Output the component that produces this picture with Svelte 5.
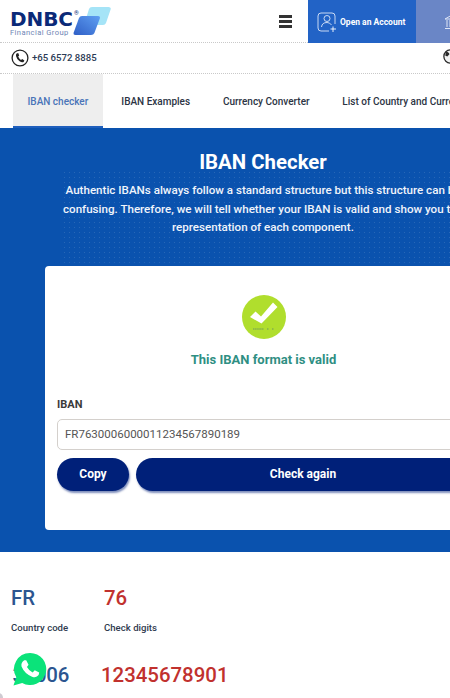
<script>
  const tabs = ["IBAN checker", "IBAN Examples", "Currency Converter", "List of Country and Currency"];
</script>

<div class="page">
  <header class="top">
    <div class="logo">
      <div class="brand">
        <span class="name">DNBC</span><span class="reg">®</span>
        <span class="sub">Financial Group</span>
      </div>
      <svg class="logo-mark" width="38" height="29" viewBox="0 0 38 29">
        <defs>
          <linearGradient id="lb" x1="0" y1="1" x2="1" y2="0">
            <stop offset="0" stop-color="#2f5fc6" />
            <stop offset="1" stop-color="#5f9ff2" />
          </linearGradient>
        </defs>
        <path d="M16 2 Q16.6 0 19 0 H35.5 Q38.4 0 37.6 2.5 L33 16 Q32.2 18 30 18 H11 Z" fill="#a5e4f7" />
        <path d="M6 11 Q6.8 9 9 9 H25 Q27.6 9 26.8 11.5 L21.4 26 Q20.6 28 18 28 H2.5 Q0 28 0.7 25.5 Z" fill="url(#lb)" />
      </svg>
    </div>
    <button class="burger" aria-label="Menu">
      <span></span><span></span><span></span>
    </button>
    <div class="account">
      <svg width="20" height="20" viewBox="0 0 20 20" fill="none" stroke="#dbe6f8" stroke-width="0.9">
        <path d="M12 19 H4 Q1 19 1 16 V4 Q1 1 4 1 H15 Q18 1 18 4 V12" />
        <circle cx="10" cy="6.5" r="3" />
        <path d="M4.5 15 Q5 10.5 10 10.5 Q13 10.5 14.5 13" />
        <path d="M16 14.5 V20 M13.5 17 H19" stroke="#fff" />
      </svg>
      <span>Open an Account</span>
    </div>
    <div class="bank">
      <svg width="18" height="18" viewBox="0 0 18 18" fill="none" stroke="#dfe6f6" stroke-width="1">
        <path d="M2 6 L9 2 L16 6 Z M4 7 V14 M7 7 V14 M11 7 V14 M14 7 V14 M2 15.5 H16" />
      </svg>
    </div>
  </header>

  <div class="contact">
    <svg class="phone" width="18" height="18" viewBox="0 0 18 18" fill="none">
      <circle cx="9" cy="9" r="7.9" stroke="#222" stroke-width="1.3" />
      <path d="M5.6 4.6 L7.2 4 L8.2 6.6 L7.2 7.6 Q8 9.8 10 11 L11.2 10 L13.4 11.4 L12.6 13 Q11 14 8.6 12.2 Q5.6 10 5 7 Q4.8 5.4 5.6 4.6 Z" fill="#222" />
    </svg>
    <span class="tel">+65 6572 8885</span>
    <svg class="globe" width="15" height="15" viewBox="0 0 14 14">
      <circle cx="7" cy="7" r="6.2" fill="#f2f2f2" stroke="#2a2a2a" stroke-width="1.2" />
      <path d="M3 2.5 Q6 3 6 5 L4 7 L2 6 Z M8 7 L12 7.5 L10 12 L8 11 Z M8 1 L11 2.5 L9 4 Z" fill="#2a2a2a" />
    </svg>
  </div>

  <nav class="tabs">
    {#each tabs as tab, i}
      <div class="tab" class:active={i === 0}>{tab}</div>
    {/each}
  </nav>

  <section class="hero">
    <div class="dots"></div>
    <h1>IBAN Checker</h1>
    <p>Authentic IBANs always follow a standard structure but this structure can be confusing. Therefore, we will tell whether your IBAN is valid and show you the representation of each component.</p>

    <div class="card">
      <svg class="check" width="44" height="44" viewBox="0 0 44 44">
        <circle cx="22" cy="22" r="22" fill="#b0de2d" />
        <path d="M8 22 L13.5 16.5 L19 21.5 L31 7.5 L35.5 12 L19.5 28.5 Z" fill="#fff" />
        <path d="M11 34 H22 M25 34 H27 M30 34 H32" stroke="#8fbb45" stroke-width="2" stroke-dasharray="1.5 0.6" />
      </svg>
      <div class="valid">This IBAN format is valid</div>
      <label class="label" for="iban">IBAN</label>
      <input id="iban" class="input" value="FR7630006000011234567890189" readonly />
      <div class="actions">
        <button class="btn copy">Copy</button>
        <button class="btn again">Check again</button>
      </div>
    </div>
  </section>

  <section class="parts">
    <div class="part">
      <div class="val blue">FR</div>
      <div class="cap">Country code</div>
    </div>
    <div class="part">
      <div class="val red">76</div>
      <div class="cap">Check digits</div>
    </div>
    <div class="part">
      <div class="val blue num bank-code">30006</div>
    </div>
    <div class="part">
      <div class="val red num acct">12345678901</div>
    </div>
  </section>

  <a class="whatsapp" href="#top" aria-label="WhatsApp">
    <svg width="35" height="34" viewBox="0 0 36 35">
      <path d="M18.5 1 A16.5 16.5 0 1 1 10.5 31.8 L1.5 34.5 L4.4 26 A16.5 16.5 0 0 1 18.5 1 Z" fill="#0be37a" />
      <path d="M12.6 8.6 L14.6 8.4 L17 13.2 L15.4 15.4 Q17.4 19.2 21.2 21 L23.4 18.8 L28 21.2 L27.4 23.8 Q25 27 20.6 25.4 Q13 22.6 9.8 15 Q9 11 12.6 8.6 Z" fill="#fff" />
    </svg>
  </a>
  <div class="corner"></div>
</div>

<style>
  :global(body) {
    margin: 0;
    overflow: hidden;
    background: #fff;
  }

  .page {
    position: relative;
    width: 526px;
    height: 698px;
    overflow: hidden;
    font-family: Roboto, "Liberation Sans", sans-serif;
    color: #222;
  }

  .top {
    display: flex;
    align-items: stretch;
    height: 43px;
    border-bottom: 1px dotted #c9c9c9;
    box-sizing: border-box;
  }

  .logo {
    display: flex;
    width: 278px;
    padding: 10px 0 0 10px;
    box-sizing: border-box;
    position: relative;
  }

  .brand {
    position: relative;
    line-height: 1;
  }

  .name {
    display: block;
    font-family: "DejaVu Sans", sans-serif;
    font-size: 20px;
    font-weight: 700;
    letter-spacing: -0.1px;
    color: #0b2a78;
    line-height: 18px;
  }

  .reg {
    position: absolute;
    left: 64px;
    top: 0;
    font-size: 6px;
    color: #0b2a78;
  }

  .sub {
    display: block;
    margin-top: 1px;
    font-size: 7.6px;
    letter-spacing: 0.4px;
    color: #6f86b5;
  }

  .logo-mark {
    position: absolute;
    left: 73px;
    top: 7px;
  }

  .burger {
    width: 30px;
    padding: 0 15px 0 0;
    background: none;
    border: none;
    display: flex;
    flex-direction: column;
    align-items: center;
    justify-content: center;
    gap: 2px;
  }

  .burger span {
    display: block;
    flex: none;
    width: 13px;
    height: 3px;
    background: #333;
  }

  .account {
    width: 108px;
    height: 43px;
    background: #2263c6;
    display: flex;
    align-items: center;
    gap: 3px;
    padding-left: 9px;
    box-sizing: border-box;
    color: #fff;
    font-size: 8.5px;
    font-weight: 700;
    white-space: nowrap;
  }

  .bank {
    flex: 1;
    height: 43px;
    background: #6a86c6;
    display: flex;
    align-items: center;
    padding-left: 27px;
  }

  .contact {
    display: flex;
    align-items: center;
    height: 31px;
    padding: 0 0 1px 11px;
    box-sizing: border-box;
    border-bottom: 1px dotted #c9c9c9;
    position: relative;
  }

  .tel {
    margin-left: 3px;
    font-size: 9.6px;
    font-weight: 500;
    color: #2b3a55;
  }

  .globe {
    position: absolute;
    left: 443px;
    top: 6px;
  }

  .tabs {
    display: flex;
    height: 54px;
    padding-left: 13px;
  }

  .tab {
    display: flex;
    align-items: center;
    padding: 0 14.5px;
    font-size: 10px;
    font-weight: 500;
    color: #2c3444;
    white-space: nowrap;
    box-sizing: border-box;
  }

  .tab + .tab {
    margin-left: 3.8px;
  }

  .tab.active {
    width: 90px;
    background: #eeeeee;
    color: #4a74b8;
    border-bottom: 2px solid #1f5fbd;
    padding-top: 2px;
  }

  .hero {
    position: relative;
    height: 424px;
    background: #0a52ae;
    padding-top: 20px;
    box-sizing: border-box;
    text-align: center;
    color: #fff;
  }

  .dots {
    position: absolute;
    left: 62px;
    top: 42px;
    width: 400px;
    height: 125px;
    background-image: radial-gradient(circle, rgba(255, 255, 255, 0.12) 0.7px, transparent 1px);
    background-size: 5px 5px;
    -webkit-mask-image: linear-gradient(to bottom, #000 70%, transparent);
    mask-image: linear-gradient(to bottom, #000 70%, transparent);
  }

  h1 {
    position: relative;
    margin: 0;
    font-size: 20.4px;
    font-weight: 700;
    line-height: 28px;
  }

  p {
    position: relative;
    width: 412px;
    margin: 5px auto 0;
    font-size: 11.6px;
    font-weight: 500;
    line-height: 18.6px;
    color: #f0f4fb;
  }

  .card {
    position: relative;
    box-sizing: border-box;
    width: 436px;
    height: 264px;
    margin: 29px 0 0 45px;
    padding: 29px 11px 0 12px;
    background: #fff;
    border-radius: 4px;
    text-align: left;
  }

  .check {
    display: block;
    margin: 0 auto;
  }

  .valid {
    margin-top: 13px;
    text-align: center;
    font-size: 13px;
    font-weight: 700;
    line-height: 16px;
    color: #2f8f83;
  }

  .label {
    display: block;
    margin-top: 30px;
    font-size: 11px;
    font-weight: 700;
    line-height: 14px;
    color: #3a3a3a;
  }

  .input {
    display: block;
    box-sizing: border-box;
    width: 100%;
    height: 31px;
    margin-top: 7px;
    padding: 0 7px;
    border: 1px solid #d4d0cc;
    border-radius: 5px;
    font-family: inherit;
    font-size: 11.5px;
    color: #555;
    background: #fff;
    outline: none;
  }

  .actions {
    display: flex;
    gap: 7px;
    margin-top: 8px;
  }

  .btn {
    height: 33px;
    border: none;
    border-radius: 17px;
    background: #002079;
    color: #fff;
    font-family: inherit;
    font-size: 12px;
    font-weight: 700;
    box-shadow: 1px 2px 2px rgba(0, 32, 121, 0.5);
  }

  .copy {
    width: 72px;
  }

  .again {
    flex: 1;
  }

  .parts {
    display: grid;
    grid-template-columns: 93px 1fr;
    padding: 32px 0 0 11px;
    row-gap: 26px;
  }

  .val {
    font-size: 20.4px;
    font-weight: 500;
    line-height: 28px;
  }

  .num {
    line-height: 30px;
  }

  .bank-code {
    margin-left: 1.5px;
    letter-spacing: -0.3px;
  }

  .acct {
    margin-left: -3px;
  }

  .blue {
    color: #2c5590;
  }

  .red {
    color: #c1312e;
  }

  .cap {
    margin-top: 10px;
    font-size: 9.6px;
    font-weight: 500;
    line-height: 12px;
    color: #2f3a4e;
  }

  .whatsapp {
    position: absolute;
    left: 12px;
    top: 652px;
    display: block;
    line-height: 0;
  }

  .corner {
    position: absolute;
    left: -5px;
    top: 693px;
    width: 8px;
    height: 10px;
    border-radius: 50%;
    background: #cfcbd2;
  }
</style>
